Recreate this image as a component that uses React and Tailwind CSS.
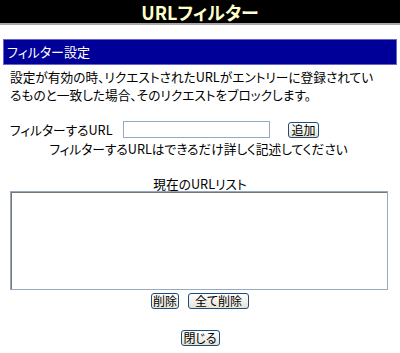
import React from "react";

function Btn({ w, children }) {
  return (
    <button
      className={`h-[16px] ${w} rounded-[3px] border border-[#1c4d7c] bg-gradient-to-b from-white to-[#e6e3d6] text-[12px] leading-[14px] text-black flex items-center justify-center p-0`}
    >
      {children}
    </button>
  );
}

export default function App() {
  return (
    <div className="w-[400px] h-[353px] bg-white overflow-hidden font-['Noto_Sans_CJK_JP',sans-serif] [font-feature-settings:'palt'] text-black">
      <div className="h-[25px] bg-black border-b-2 border-[#a8a8a8] flex items-center justify-center">
        <span className="text-[#ffffcc] font-bold text-[18px] leading-[20px]">URLフィルター</span>
      </div>
      <div className="mt-[14px] mx-[3px] h-[26px] bg-[#000099] border border-[#6666cc] flex items-center pl-[3px]">
        <span className="text-white text-[13px] leading-[16px]">フィルター設定</span>
      </div>
      <div className="mt-[3px] px-[10px] text-[12.7px] leading-[18px]">
        <div>設定が有効の時、リクエストされたURLがエントリーに登録されてい</div>
        <div>るものと一致した場合、そのリクエストをブロックします。</div>
      </div>
      <div className="mt-[17px] flex items-center h-[17px] text-[12.7px]">
        <span className="ml-[10px] w-[113px] leading-[16px]">フィルターするURL</span>
        <input className="w-[147px] h-[17px] border border-[#94aac4] outline-none" />
        <div className="ml-[18px]">
          <Btn w="w-[31px]">追加</Btn>
        </div>
      </div>
      <div className="mt-[3px] text-center text-[12.7px] leading-[16px] pr-[3px]">
        フィルターするURLはできるだけ詳しく記述してください
      </div>
      <div className="mt-[20px] text-center text-[12.7px] leading-[14px]">現在のURLリスト</div>
      <div className="mx-[10px] w-[378px] h-[99px] border border-[#94aac4] shadow-[inset_1px_1px_0_#7a766a]"></div>
      <div className="mt-[3px] flex justify-center gap-[9px]">
        <Btn w="w-[28px]">削除</Btn>
        <Btn w="w-[61px]">全て削除</Btn>
      </div>
      <div className="mt-[21px] flex justify-center">
        <Btn w="w-[39px]">閉じる</Btn>
      </div>
    </div>
  );
}
